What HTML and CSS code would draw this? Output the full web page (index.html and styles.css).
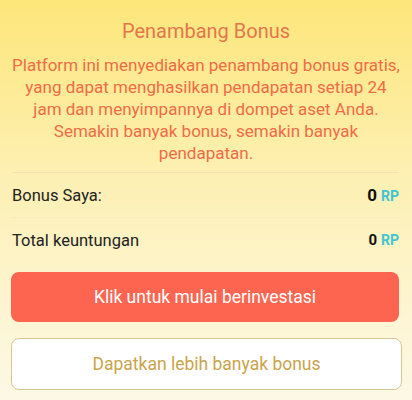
FILE: index.html
```html
<!DOCTYPE html>
<html>
<head>
<meta charset="utf-8">
<link rel="stylesheet" href="styles.css">
</head>
<body>
<div class="page">
  <h1 class="title">Penambang Bonus</h1>
  <p class="desc">Platform ini menyediakan penambang bonus gratis, yang dapat menghasilkan pendapatan setiap 24 jam dan menyimpannya di dompet aset Anda. Semakin banyak bonus, semakin banyak pendapatan.</p>
  <div class="rows">
    <div class="row">
      <span class="label">Bonus Saya:</span>
      <span class="value"><b class="num big">0</b><b class="unit">RP</b></span>
    </div>
    <div class="row">
      <span class="label">Total keuntungan</span>
      <span class="value"><b class="num">0</b><b class="unit">RP</b></span>
    </div>
  </div>
  <div class="actions">
    <button class="btn btn-primary">Klik untuk mulai berinvestasi</button>
    <button class="btn btn-outline">Dapatkan lebih banyak bonus</button>
  </div>
</div>
</body>
</html>
```

FILE: styles.css
```css
html, body {
  margin: 0;
  padding: 0;
}
body {
  width: 412px;
  height: 400px;
  overflow: hidden;
  font-family: Roboto, "Noto Sans", sans-serif;
  background: linear-gradient(180deg, #fde67a 0%, #fdf0b4 45%, #fdf8e6 100%);
}
.page {
  padding: 18px 11px 0 11px;
  display: flex;
  flex-direction: column;
}
.title {
  margin: 0;
  text-align: center;
  font-size: 20px;
  font-weight: 400;
  line-height: 26px;
  color: #e2774d;
}
.desc {
  margin: 10px -1px 0 -1px;
  text-align: center;
  font-size: 17px;
  line-height: 22px;
  color: #ef6c47;
}
.rows {
  margin-top: 8px;
  border-top: 1px solid #f1e3b0;
  margin-left: 1px;
  margin-right: 2px;
}
.row {
  height: 44px;
  display: flex;
  align-items: center;
  justify-content: space-between;
  border-bottom: 1px solid #f5ebc5;
}
.row:last-child {
  border-bottom: none;
}
.label {
  font-size: 16.5px;
  color: #222;
}
.value {
  display: flex;
  align-items: baseline;
  gap: 4px;
}
.num {
  font-size: 15px;
  font-weight: 700;
  color: #111;
}
.num.big {
  font-size: 17px;
}
.unit {
  font-size: 14px;
  font-weight: 700;
  color: #3fc4d2;
}
.actions {
  margin-top: 10px;
  display: flex;
  flex-direction: column;
  gap: 16px;
}
.btn {
  height: 50px;
  border-radius: 8px;
  font-family: Roboto, "Noto Sans", sans-serif;
  font-size: 17.5px;
  cursor: pointer;
}
.btn-primary {
  margin-right: 2px;
  border: none;
  background: #fd6550;
  color: #fff;
}
.btn-outline {
  height: 52px;
  margin-right: -1px;
  border: 1px solid #d6c795;
  background: #fff;
  color: #c9a44c;
}
```
